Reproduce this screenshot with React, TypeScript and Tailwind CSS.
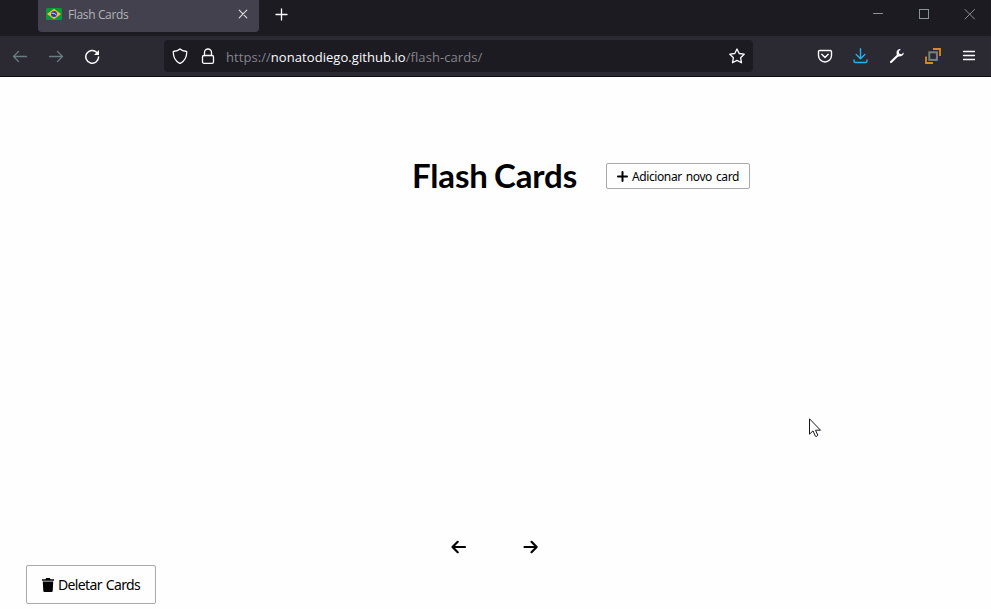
import React from "react";

type IconProps = { className?: string; children: React.ReactNode; size?: number; width?: number };

function Icon({ className = "", children, size = 16, width = 1.3 }: IconProps) {
  return (
    <svg
      className={`block shrink-0 ${className}`}
      width={size}
      height={size}
      viewBox={`0 0 ${size} ${size}`}
      fill="none"
      stroke="currentColor"
      strokeWidth={width}
      strokeLinecap="round"
      strokeLinejoin="round"
    >
      {children}
    </svg>
  );
}

function TitleBar() {
  return (
    <div className="flex h-9 bg-[#1c1b22] pl-[38px]">
      <div className="flex h-8 w-[221px] items-start rounded-b-[4px] bg-[#42414d] pl-2 pt-[6px]">
        <svg className="mt-[2px] block shrink-0" width="16" height="12" viewBox="0 0 16 12">
          <rect width="16" height="12" rx="1.5" fill="#079b37" />
          <path d="M8 0.8 L15 6 L8 11.2 L1 6 Z" fill="#f4b84a" />
          <circle cx="8" cy="6" r="3" fill="#28408f" />
          <path d="M5.5 5.2 Q8.5 4.6 10.5 7.2" stroke="#dfe6ee" strokeWidth="0.9" fill="none" />
        </svg>
        <span className="ml-[6px] w-[169px] whitespace-nowrap text-[12px] leading-[18px] tracking-[-0.36px] text-[#b4b4b8]">
          Flash Cards
        </span>
        <Icon size={12} width={1.1} className="mt-[2px] text-[#e0e0e4]">
          <path d="M2.2 2.2 L9.8 9.8 M9.8 2.2 L2.2 9.8" />
        </Icon>
      </div>
      <Icon className="ml-[15px] mt-[7px] text-[#fbfbfe]" width={1.3}>
        <path d="M7.5 2 V13 M2 7.5 H13" />
      </Icon>
      <div className="ml-auto flex gap-[30px] pr-[13px] pt-[6px] text-[#8a9494]">
        <Icon width={1}><path d="M3.5 7.5 H12.5" /></Icon>
        <Icon width={1}><rect x="3.5" y="3.5" width="9" height="9" strokeLinejoin="miter" /></Icon>
        <Icon width={1}><path d="M3 3.5 L12.5 13 M12.5 3.5 L3 13" /></Icon>
      </div>
    </div>
  );
}

function Toolbar() {
  return (
    <div className="flex h-[41px] items-center border-b border-[#0c0c0d] bg-[#2b2a33] pl-3 pr-[14px] text-[#fbfbfe]">
      <Icon className="text-[#6b7b80]">
        <path d="M1.5 8.5 H14.5 M6.5 3.5 L1.5 8.5 L6.5 13.5" />
      </Icon>
      <Icon className="ml-5 text-[#6b7b80]">
        <path d="M1.5 8.5 H14.5 M9.5 3.5 L14.5 8.5 L9.5 13.5" />
      </Icon>
      <Icon className="ml-5" width={1.5}>
        <path d="M14.6 9 A6.4 6.4 0 1 1 12.6 4.2" />
        <path d="M15 2 V7 H10 Z" fill="currentColor" stroke="none" />
      </Icon>
      <div className="ml-16 flex h-8 w-[589px] items-center rounded-[4px] bg-[#1c1b22] px-2">
        <Icon>
          <path d="M8 1 C6.3 2.6 3.5 3.2 1.3 3.5 C1.1 8.8 3 12.8 8 15.6 C13 12.8 14.9 8.8 14.7 3.5 C12.5 3.2 9.7 2.6 8 1 Z" />
        </Icon>
        <Icon className="ml-3">
          <rect x="2.5" y="7.5" width="11" height="7.8" rx="1.4" />
          <path d="M4.5 7.5 V4.5 A3.5 3.5 0 0 1 11.5 4.5 V7.5" />
        </Icon>
        <span className="ml-[10px] whitespace-nowrap pt-[2px] text-[13px] leading-5 tracking-[0.06px] text-[#85848b]">
          https://<span className="text-[#fbfbfe]">nonatodiego.github.io</span>/flash-cards/
        </span>
        <Icon className="ml-auto">
          <path d="M8 1 L10.2 5.5 L15.2 6.2 L11.6 9.7 L12.5 14.8 L8 12.4 L3.5 14.8 L4.4 9.7 L0.8 6.2 L5.8 5.5 Z" />
        </Icon>
      </div>
      <div className="ml-auto flex items-center gap-5">
        <Icon width={1.4}>
          <path d="M2.7 2.5 H13.3 A1.2 1.2 0 0 1 14.5 3.7 V7.5 A6.5 6.5 0 0 1 1.5 7.5 V3.7 A1.2 1.2 0 0 1 2.7 2.5 Z M4.8 6.2 L8 9.4 L11.2 6.2" />
        </Icon>
        <Icon className="text-[#25b1f5]" width={1.4}>
          <path d="M7.5 0.7 V10.5 M3.2 6.5 L7.5 10.8 L11.8 6.5 M1 12 V13 A1.5 1.5 0 0 0 2.5 14.5 H12.5 A1.5 1.5 0 0 0 14 13 V12" />
        </Icon>
        <Icon width={2.2}>
          <path d="M2 14 L9 7.3" />
          <path
            d="M11.8 1 C9.5 0.7 7.2 2.5 7.6 5.3 L7.8 7.3 L9 8.5 C12 9 14.8 7.3 14.9 4.5 L12.4 6.3 L10.1 5.6 L9.8 3.6 Z"
            fill="currentColor"
            stroke="none"
          />
        </Icon>
        <Icon width={1.8}>
          <path d="M8 1 H15 V8 M1 8.5 V15 H8" stroke="#d98a20" strokeLinecap="butt" strokeLinejoin="miter" />
          <rect x="4.3" y="4.3" width="7.6" height="7.6" stroke="#768084" strokeWidth="2" strokeLinejoin="miter" />
        </Icon>
        <Icon width={1.3}>
          <path d="M2.5 3.5 H13.5 M2.5 7.5 H13.5 M2.5 11.5 H13.5" />
        </Icon>
      </div>
    </div>
  );
}

export default function App() {
  return (
    <div className="flex h-[609px] w-[991px] flex-col overflow-hidden bg-[#fefefe] font-['Open_Sans','Noto_Sans',sans-serif]">
      <TitleBar />
      <Toolbar />
      <main className="relative flex flex-1 flex-col text-black">
        <header className="mt-[74px] flex h-[50px] shrink-0 items-center pl-[412px]">
          <h1 className="w-[194px] whitespace-nowrap pb-[2px] font-['Lato',sans-serif] text-[33px] font-bold leading-[42px] tracking-[-0.15px] [word-spacing:-1.5px]">
            Flash Cards
          </h1>
          <button className="flex h-[26px] w-36 items-center rounded-[2px] border border-[#a9a9a9] pl-[10px] font-['Noto_Sans',sans-serif] text-[12px]">
            <Icon size={11} width={2}><path d="M5.5 1 V10 M1 5.5 H10" /></Icon>
            <span className="ml-1 whitespace-nowrap pt-px tracking-[-0.4px] [word-spacing:1.3px]">Adicionar novo card</span>
          </button>
        </header>
        <nav className="mt-auto flex gap-14 pl-[451px]">
          <Icon width={2.2}><path d="M1.5 8 H14 M6.7 2.8 L1.5 8 L6.7 13.2" /></Icon>
          <Icon width={2.2}><path d="M1.5 8 H13.7 M8.5 2.8 L13.7 8 L8.5 13.2" /></Icon>
        </nav>
        <button className="mb-[5px] ml-[26px] mt-[10px] flex h-[39px] w-[130px] shrink-0 items-center rounded-[2px] border border-[#a9a9a9] pl-[15px] font-['Noto_Sans',sans-serif] text-[14px]">
          <svg className="block shrink-0" width="12" height="14" viewBox="0 0 12 14">
            <path d="M0 1.2 H3.5 L4.3 0 H7.7 L8.5 1.2 H12 V2.8 H0 Z M0.8 3.4 H11.2 L10.7 13 Q10.6 14 9.6 14 H2.4 Q1.4 14 1.3 13 Z" />
          </svg>
          <span className="ml-1 whitespace-nowrap tracking-[-0.65px] [word-spacing:1px]">Deletar Cards</span>
        </button>
        <svg className="absolute left-[809px] top-[341px]" width="13" height="20" viewBox="0 0 13 20">
          <path
            d="M0.5 0.8 V16.2 L4 12.9 L6.4 18.2 Q8.1 19 8.8 17.2 L6.5 12.2 H11.5 Z"
            fill="white"
            stroke="#17131f"
            strokeWidth="1"
          />
        </svg>
      </main>
    </div>
  );
}
